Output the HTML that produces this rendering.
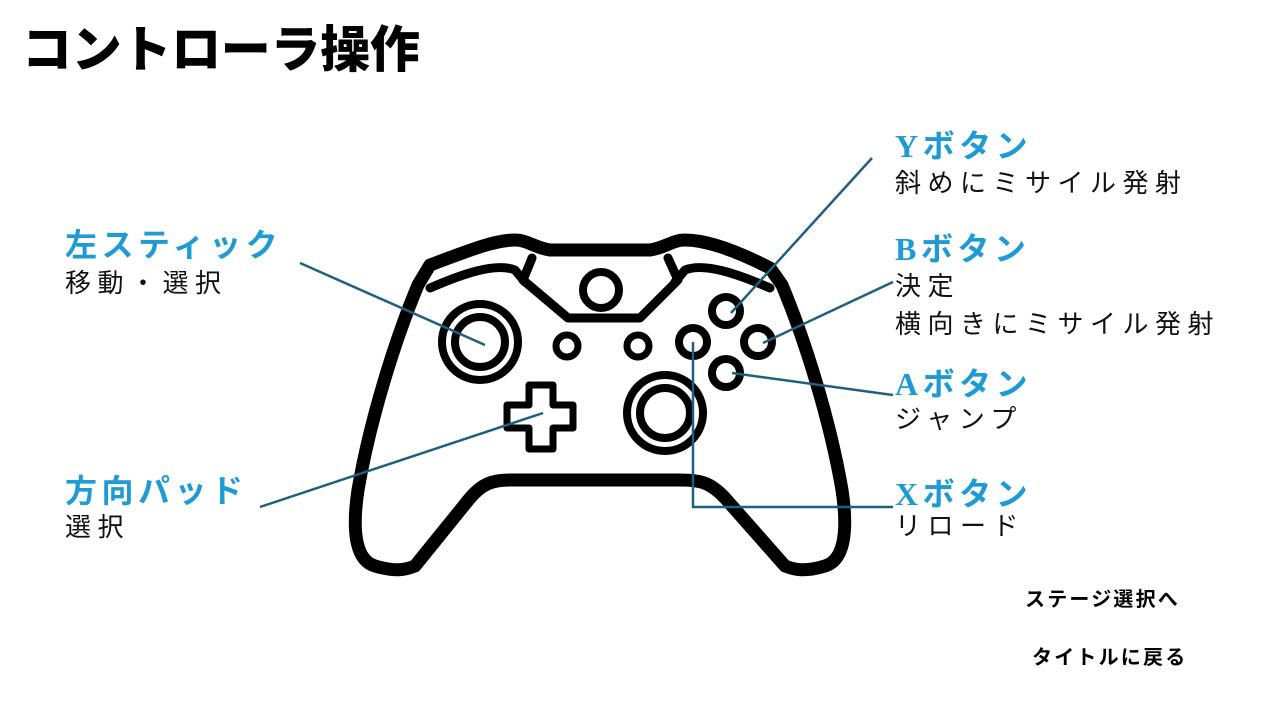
<!DOCTYPE html>
<html><head><meta charset="utf-8"><style>
body{margin:0;width:1280px;height:720px;background:#fff;position:relative;overflow:hidden;font-family:"Liberation Sans","Noto Sans CJK JP",sans-serif}
.t{position:absolute;white-space:nowrap}
.title{left:22px;top:20px;font-size:50px;font-weight:900;line-height:60px;letter-spacing:-0.3px;color:#000}
.lab{font-family:"Liberation Serif","Noto Sans CJK JP",serif;font-weight:bold;color:#1e9bd4;font-size:32px;line-height:34px;letter-spacing:4.5px}
.body{font-size:26px;line-height:30px;color:#111;letter-spacing:6.5px;font-weight:normal}
.btn{font-size:20px;font-weight:bold;line-height:22px;color:#000;letter-spacing:2.2px}
</style></head><body>
<div class="t title">コントローラ操作</div>
<svg width="1280" height="720" style="position:absolute;left:0;top:0">
<g fill="none" stroke="#000" stroke-width="13" stroke-linejoin="round" stroke-linecap="round">
<path d="M430 265 C470 250 495 240 515 240 C528 240 535 248 550 250 L650 250 C665 248 672 240 685 240 C705 240 735 250 770 268 L782 285 C805 340 830 420 842 490 C848 530 845 560 825 566 C805 572 795 570 785 566 L725 498 C710 482 700 480 680 480 L510 480 C492 480 482 484 470 498 L415 566 C405 570 395 572 375 566 C355 560 352 530 358 490 C370 420 395 340 418 285 Z"/>
<path d="M430 288 C460 275 495 262 515 270 L525 282" stroke-width="9"/>
<path d="M770 288 C740 275 705 262 685 270 L675 282" stroke-width="9"/>
<path d="M532 258 L523 280 L568 318 L640 318 L678 280 L668 258" stroke-width="9"/>
<circle cx="601" cy="290" r="18" stroke-width="8"/>
<circle cx="480" cy="342" r="38" stroke-width="8"/>
<circle cx="480" cy="342" r="25" stroke-width="8"/>
<circle cx="665" cy="413" r="38" stroke-width="8"/>
<circle cx="665" cy="413" r="25" stroke-width="8"/>
<circle cx="567" cy="346" r="11" stroke-width="7"/>
<circle cx="638" cy="346" r="11" stroke-width="7"/>
<circle cx="726" cy="311" r="14" stroke-width="8"/>
<circle cx="758" cy="342" r="14" stroke-width="8"/>
<circle cx="726" cy="373" r="14" stroke-width="8"/>
<circle cx="693" cy="342" r="14" stroke-width="8"/>
<path d="M529 385 L553 385 L553 405 L573 405 L573 428 L553 428 L553 449 L529 449 L529 428 L507 428 L507 405 L529 405 Z" stroke-width="7"/>
</g>
<g stroke="#1f5f80" stroke-width="2.5" fill="none">
<line x1="300" y1="263" x2="485" y2="345"/>
<line x1="260" y1="507" x2="543" y2="413"/>
<line x1="872" y1="158" x2="731" y2="313"/>
<line x1="893" y1="282" x2="763" y2="343"/>
<line x1="893" y1="395" x2="732" y2="373"/>
<polyline points="693,342 693,507 893,507"/>
</g>
</svg>
<div class="t lab" style="left:65px;top:228px">左スティック</div>
<div class="t body" style="left:65px;top:268px">移動・選択</div>
<div class="t lab" style="left:65px;top:474px">方向パッド</div>
<div class="t body" style="left:65px;top:512px">選択</div>
<div class="t lab" style="left:895px;top:129px">Yボタン</div>
<div class="t body" style="left:895px;top:168px">斜めにミサイル発射</div>
<div class="t lab" style="left:895px;top:232px">Bボタン</div>
<div class="t body" style="left:895px;top:271px">決定</div>
<div class="t body" style="left:895px;top:309px">横向きにミサイル発射</div>
<div class="t lab" style="left:895px;top:367px">Aボタン</div>
<div class="t body" style="left:895px;top:404px">ジャンプ</div>
<div class="t lab" style="left:895px;top:477px">Xボタン</div>
<div class="t body" style="left:895px;top:511px">リロード</div>
<div class="t btn" style="left:1025px;top:589px">ステージ選択へ</div>
<div class="t btn" style="left:1032px;top:647px">タイトルに戻る</div>
</body></html>
